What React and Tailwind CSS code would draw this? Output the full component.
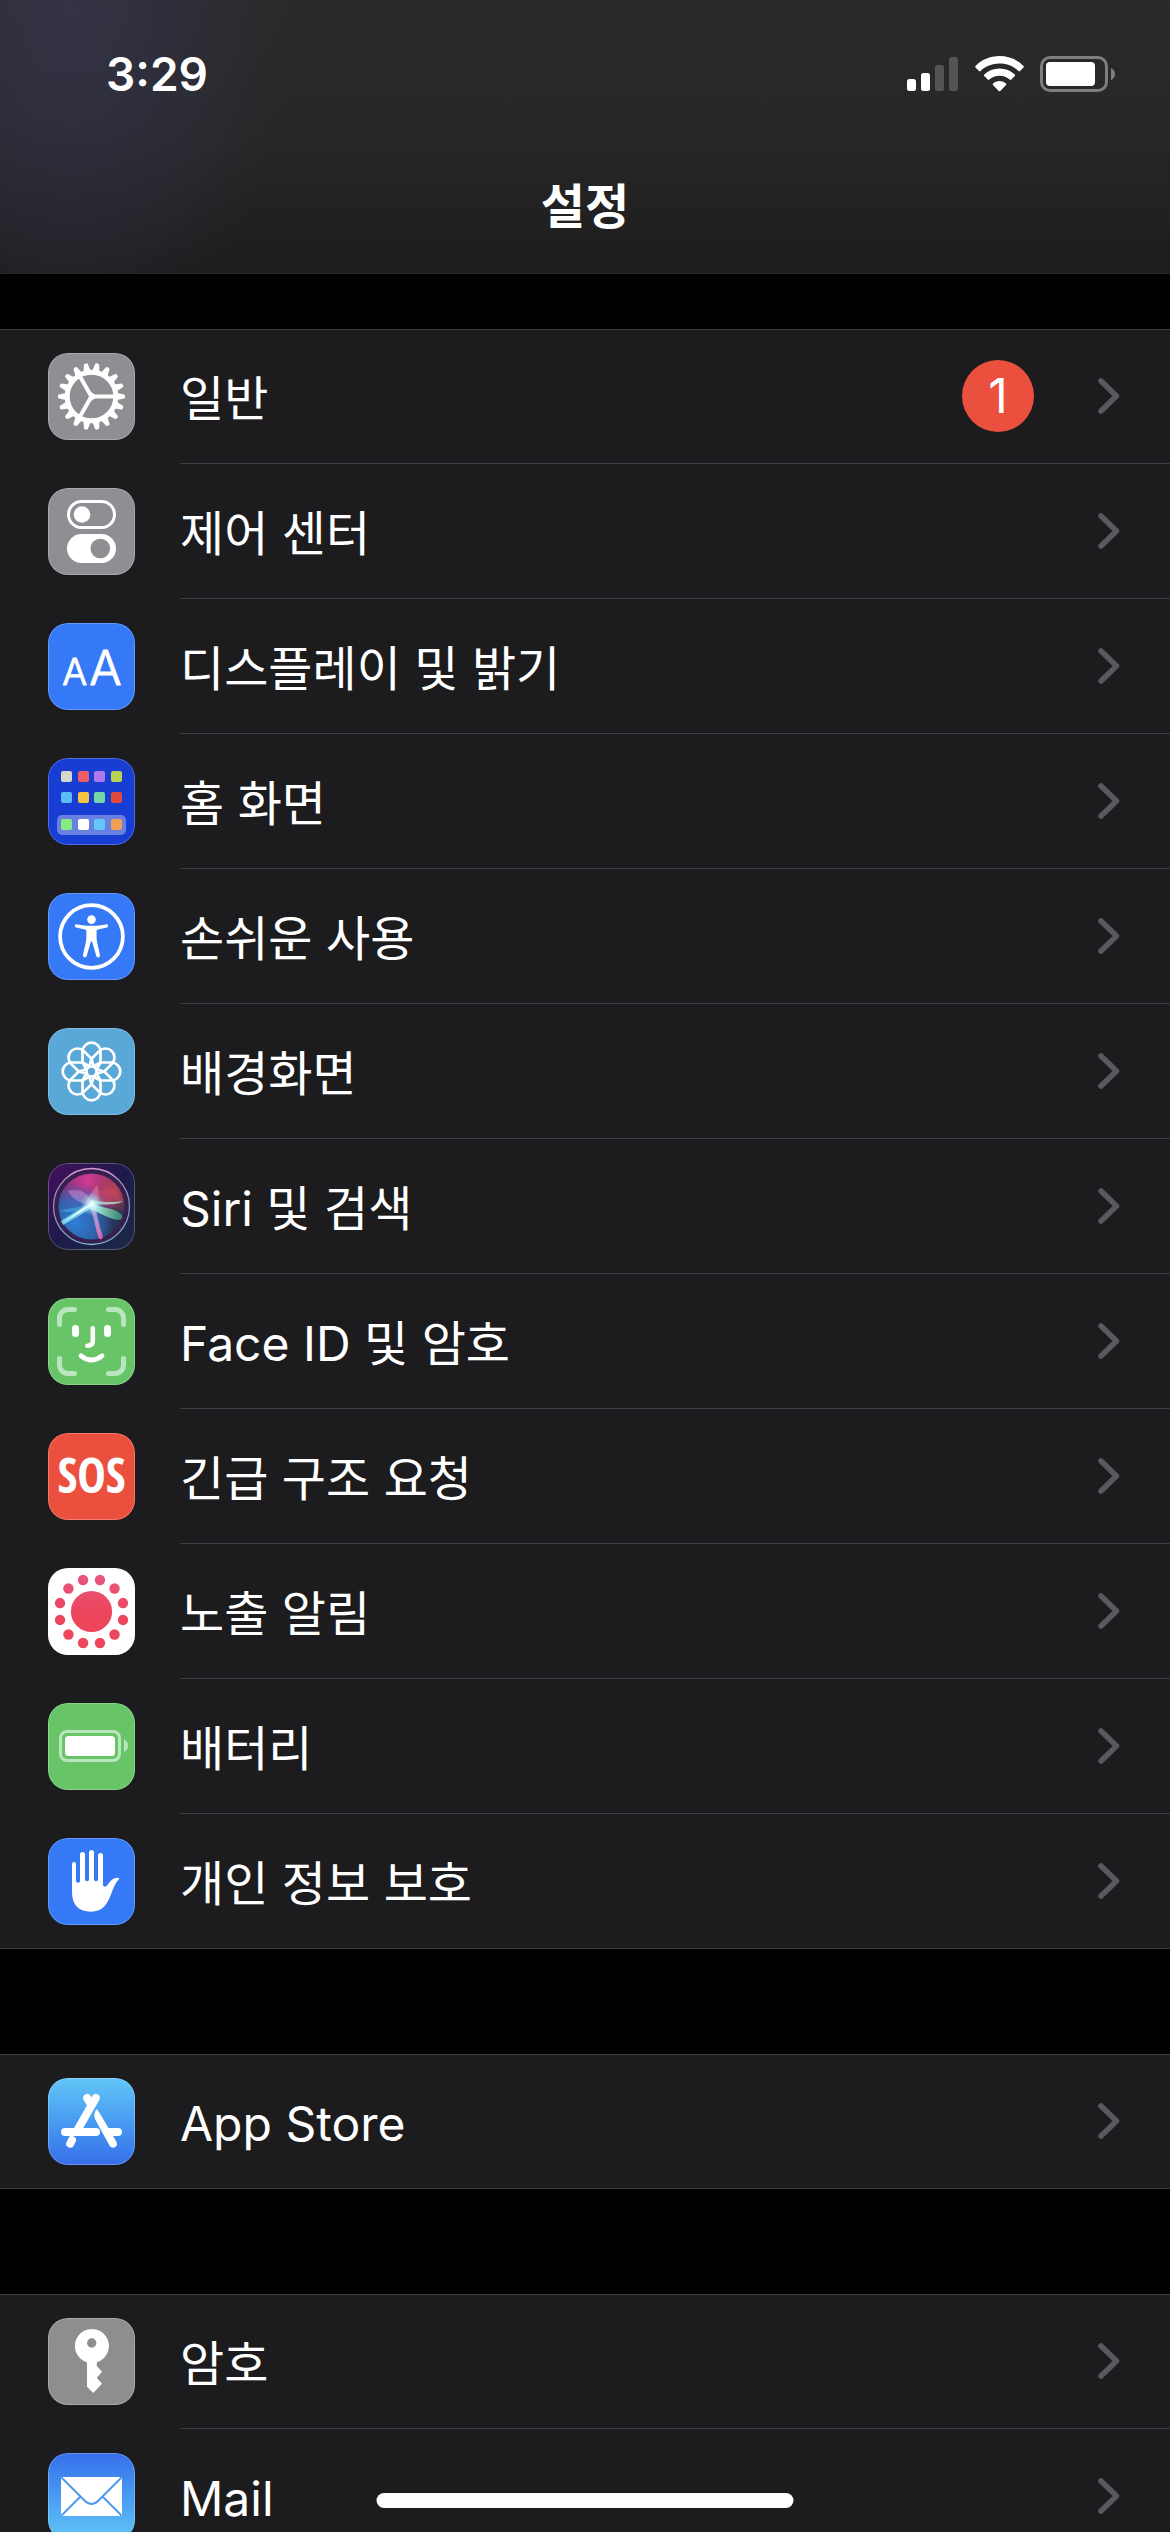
const TEETH = Array.from({ length: 18 }, (_, i) => i * 20)
const DOTS = Array.from({ length: 12 }, (_, i) => 15 + i * 30)
const PETALS = [0, 45, 90, 135, 180, 225, 270, 315]

const HOME_APPS = [
  ["#d6d6cc", "#ec5c66", "#ad78f0", "#b9d254"],
  ["#5cbcf5", "#f7c544", "#74d6a6", "#e4483a"],
  ["#86ec80", "#ffffff", "#62c8f7", "#f0a055"],
]
const HOME_ROWS = [13, 34, 61]
const HOME_COLS = [13, 30, 46, 63]

function GearIcon() {
  return (
    <g transform="translate(43.5 43.5)">
      <circle r="24.3" fill="none" stroke="white" strokeWidth="5" />
      {TEETH.map((angle) => (
        <path
          key={angle}
          d="M25.5 -3.6 L32.6 -2 Q33.6 -1.8 33.6 0 Q33.6 1.8 32.6 2 L25.5 3.6Z"
          fill="white"
          transform={`rotate(${angle})`}
        />
      ))}
      <path
        d="M1.5 0H23M-.8 -1.3L-11.5 -20M-.8 1.3L-11.5 20"
        fill="none"
        stroke="white"
        strokeWidth="4"
      />
      <path d="M-2.6 0L-.4 -4.6L4 -1.5V1.5L-.4 4.6Z" fill="white" />
    </g>
  )
}

function TogglesIcon() {
  return (
    <>
      <rect x="20.5" y="13.5" width="46" height="26" rx="13" fill="none" stroke="white" strokeWidth="3" />
      <circle cx="34" cy="26.5" r="8.3" fill="white" />
      <rect x="19" y="46" width="49" height="29" rx="14.5" fill="white" />
      <circle cx="52.3" cy="60.5" r="9.8" fill="#8e8e93" />
    </>
  )
}

function TextSizeIcon() {
  return (
    <g
      fill="white"
      stroke="white"
      strokeWidth="1"
      strokeLinejoin="round"
      fontWeight="300"
      textAnchor="middle"
      className="font-[Inter]"
    >
      <text x="26.7" y="61.5" fontSize="37">A</text>
      <text x="57.4" y="61.5" fontSize="48">A</text>
    </g>
  )
}

function HomeScreenIcon() {
  return (
    <>
      <rect x="9" y="57" width="69" height="20" rx="5" fill="white" fillOpacity="0.35" />
      {HOME_APPS.map((row, r) =>
        row.map((color, c) => (
          <rect key={color} x={HOME_COLS[c]} y={HOME_ROWS[r]} width="11" height="11" rx="2" fill={color} />
        ))
      )}
    </>
  )
}

function AccessibilityIcon() {
  return (
    <>
      <circle cx="43.5" cy="43.5" r="31.4" fill="none" stroke="white" strokeWidth="3.8" />
      <circle cx="43.5" cy="26.6" r="4.3" fill="white" />
      <path
        d="M28.6 31.2C34 32.3 38 32.8 43.5 32.8S53 32.3 58.4 31.2C60.4 31 60.8 34 58.8 34.6L49.2 36.8C48.6 37 48.6 37.4 48.6 38V44.5C48.7 49 51 57 52 62.2C52.3 64.6 49.2 65.3 48.3 63L44.4 49.5C44 48.2 43 48.2 42.6 49.5L38.7 63C37.8 65.3 34.7 64.6 35 62.2C36 57 38.3 49 38.4 44.5V38C38.4 37.4 38.4 37 37.8 36.8L28.2 34.6C26.2 34 26.6 31 28.6 31.2Z"
        fill="white"
      />
    </>
  )
}

function FlowerIcon() {
  return (
    <g transform="translate(43.5 43.5)" fill="none" stroke="white" strokeWidth="2.7">
      <circle r="5" />
      {PETALS.map((angle) => (
        <path
          key={angle}
          d="M-1.8 -5L-9 -9V-19.8A9 9 0 0 1 9 -19.8V-9L1.8 -5"
          strokeLinejoin="round"
          transform={`rotate(${angle})`}
        />
      ))}
    </g>
  )
}

function SiriIcon() {
  return (
    <>
      <defs>
        <linearGradient id="siriBg" x1="0" y1="0" x2="1" y2="1">
          <stop offset="0" stopColor="#43105c" />
          <stop offset="0.5" stopColor="#1d1a4a" />
          <stop offset="1" stopColor="#1b2b45" />
        </linearGradient>
        <linearGradient id="siriRing" x1="0" y1="0" x2="0" y2="1">
          <stop offset="0" stopColor="#d79ad0" />
          <stop offset="0.5" stopColor="#8f8ab5" />
          <stop offset="1" stopColor="#7fb9cc" />
        </linearGradient>
        <radialGradient id="siriPink" cx="0.45" cy="0.1" r="0.6">
          <stop offset="0" stopColor="#d63a94" />
          <stop offset="0.7" stopColor="#a53288" stopOpacity="0.7" />
          <stop offset="1" stopColor="#a53288" stopOpacity="0" />
        </radialGradient>
        <radialGradient id="siriRed" cx="0.85" cy="0.25" r="0.4">
          <stop offset="0" stopColor="#b8404f" />
          <stop offset="1" stopColor="#b8404f" stopOpacity="0" />
        </radialGradient>
        <radialGradient id="siriBlue" cx="0.25" cy="0.75" r="0.6">
          <stop offset="0" stopColor="#2f80d6" />
          <stop offset="0.6" stopColor="#2f6fc4" stopOpacity="0.75" />
          <stop offset="1" stopColor="#2f6fc4" stopOpacity="0" />
        </radialGradient>
        <radialGradient id="siriGlow">
          <stop offset="0" stopColor="white" />
          <stop offset="0.3" stopColor="#c9fbff" stopOpacity="0.7" />
          <stop offset="1" stopColor="#7fe6ee" stopOpacity="0" />
        </radialGradient>
        <linearGradient id="siriGreen">
          <stop offset="0" stopColor="#d8fff4" />
          <stop offset="1" stopColor="#41c98c" stopOpacity="0.55" />
        </linearGradient>
        <linearGradient id="siriStem" x1="0" y1="0" x2="0" y2="1">
          <stop offset="0" stopColor="#f3e6ff" stopOpacity="0.5" />
          <stop offset="1" stopColor="#ee62ad" stopOpacity="0.9" />
        </linearGradient>
      </defs>
      <rect width="87" height="87" fill="url(#siriBg)" />
      <circle cx="43.5" cy="43.5" r="38" fill="#35204f" stroke="url(#siriRing)" strokeWidth="1.3" />
      <circle cx="43.5" cy="43.5" r="33" fill="#283352" />
      <circle cx="43.5" cy="43.5" r="33" fill="url(#siriPink)" />
      <circle cx="43.5" cy="43.5" r="33" fill="url(#siriRed)" />
      <circle cx="43.5" cy="43.5" r="33" fill="url(#siriBlue)" />
      <path d="M20 28C32 25 40 29 45 41C36 42 25 38 20 28Z" fill="#e9a5dc" fillOpacity="0.4" />
      <path d="M35 43C40 36 45 27 49 22C53 30 50 40 46 48Z" fill="#f49cc4" fillOpacity="0.4" />
      <path d="M43 41C52 23 66 19 75 37C72 42 58 42 43 41Z" fill="#d9556c" fillOpacity="0.3" />
      <path d="M43 41C58 42 70 42 75 38C66 40 52 39 43 37Z" fill="#b9f2dc" fillOpacity="0.7" />
      <path d="M11 48C22 45 33 44 44 41C33 49 22 50 11 48Z" fill="#55cfe8" fillOpacity="0.4" />
      <path d="M42 38L49 42C56 46 65 44 73 51C77 56 71 58 65 56C56 53 48 48 40 44Z" fill="url(#siriGreen)" />
      <path d="M41 43C46 52 47 64 50 73C52 79 56 76 54 71C51 62 49 53 47 42Z" fill="url(#siriStem)" />
      <path d="M44 38L13 58L15 62L46 44Z" fill="#8bf0f5" fillOpacity="0.75" />
      <path d="M44 39L14 60L45 42Z" fill="white" />
      <circle cx="44" cy="41" r="12" fill="url(#siriGlow)" />
    </>
  )
}

function FaceIdIcon() {
  return (
    <g fill="none" strokeLinecap="round">
      <path
        d="M11.5 26.5V20A8.5 8.5 0 0 1 20 11.5H26.5M60.5 11.5H67A8.5 8.5 0 0 1 75.5 20V26.5M75.5 60.5V67A8.5 8.5 0 0 1 67 75.5H60.5M26.5 75.5H20A8.5 8.5 0 0 1 11.5 67V60.5"
        stroke="#bae6bf"
        strokeWidth="5"
      />
      <path d="M27.5 30.5V35.5M59.5 30.5V35.5" stroke="white" strokeWidth="7" />
      <path d="M44.8 30.3V43.5Q44.8 47.5 39.3 47.7" stroke="white" strokeWidth="4.6" />
      <path d="M33 57.8Q43.5 66.2 54 57.8" stroke="white" strokeWidth="4.8" />
    </g>
  )
}

function SosIcon() {
  return (
    <text
      x="43.5"
      y="60"
      fontSize="48"
      fontWeight="700"
      textAnchor="middle"
      fill="white"
      className="font-['Liberation_Sans_Narrow','Open_Sans_Condensed','Liberation_Sans',sans-serif]"
    >
      SOS
    </text>
  )
}

function ExposureIcon() {
  return (
    <>
      <defs>
        <linearGradient id="exposure" gradientUnits="userSpaceOnUse" x1="0" y1="8" x2="0" y2="45">
          <stop offset="0" stopColor="#e8567f" />
          <stop offset="1" stopColor="#ec455c" />
        </linearGradient>
      </defs>
      <g fill="url(#exposure)">
        <circle cx="43.5" cy="43.5" r="20.6" />
        {DOTS.map((angle) => {
          const rad = (angle * Math.PI) / 180
          return (
            <circle key={angle} cx={43.5 + 32.6 * Math.cos(rad)} cy={43.5 + 32.6 * Math.sin(rad)} r="5.2" />
          )
        })}
      </g>
    </>
  )
}

function BatteryTileIcon() {
  return (
    <>
      <rect x="12.5" y="28.5" width="59" height="29" rx="6.5" fill="none" stroke="#bae6bf" strokeWidth="3" />
      <rect x="17" y="33" width="50" height="20" rx="3.5" fill="white" />
      <path d="M76 36.3Q80 38.5 80 42.8T76 49.3Z" fill="#bae6bf" />
    </>
  )
}

function HandIcon() {
  return (
    <path
      d="M24 26A2 2 0 0 1 28 26V43.5Q30 46 32 43.5V16.5A2.5 2.5 0 0 1 37 16.5V42Q39 44.5 41 42V14.5A2.5 2.5 0 0 1 46 14.5V42Q48 44.5 50 42V17.5A2.5 2.5 0 0 1 55 17.5V47Q56 50 58.5 48C62 44.5 63 40 70 39.7Q71.5 40 71 41.2C67 45 65.5 50 63.5 55C59.5 66 55 73.7 43 73.7C29.5 73.7 24 65.5 24 54Z"
      fill="white"
    />
  )
}

function AppStoreIcon() {
  return (
    <g fill="none" stroke="white" strokeWidth="8">
      <path d="M47.8 20L29.5 52M39.2 20L43.5 27.5" strokeLinecap="round" />
      <path d="M17 54H48M60 54H70" strokeLinecap="round" />
      <path d="M28 54H49M58 54H66" />
      <path d="M24 62L22.2 65.7" strokeLinecap="round" />
      <path
        d="M49 31C46 34 45.5 38 47.5 42L61.5 67.5C64 72 70.8 69 68.5 64L54 39Z"
        fill="white"
        stroke="none"
      />
    </g>
  )
}

function KeyIcon() {
  return (
    <path
      fillRule="evenodd"
      d="M39 44.2A17 17 0 1 1 48.8 44.2V48L54 53.7L48.8 59.7L54 65.7L45.3 75L39 68.7ZM43.7 20.3A4.7 4.7 0 1 0 43.7 29.7A4.7 4.7 0 1 0 43.7 20.3Z"
      fill="white"
    />
  )
}

function MailIcon() {
  return (
    <>
      <rect x="13" y="24" width="61" height="39" rx="2" fill="white" />
      <path
        d="M13.5 24.5L36.5 47.5Q43.5 54.5 50.5 47.5L73.5 24.5M13.5 62.5L32.5 43.5M73.5 62.5L54.5 43.5"
        fill="none"
        stroke="#4a97f0"
        strokeWidth="1.8"
      />
    </>
  )
}

const GROUPS = [
  [
    { label: "일반", tile: "bg-[#8e8e93]", icon: GearIcon, badge: 1 },
    { label: "제어 센터", tile: "bg-[#8e8e93]", icon: TogglesIcon },
    { label: "디스플레이 및 밝기", tile: "bg-[#3579f6]", icon: TextSizeIcon },
    { label: "홈 화면", tile: "bg-[#183dd3]", icon: HomeScreenIcon },
    { label: "손쉬운 사용", tile: "bg-[#3579f6]", icon: AccessibilityIcon },
    { label: "배경화면", tile: "bg-[#59a8d8]", icon: FlowerIcon },
    { label: "Siri 및 검색", tile: "bg-[#1d1a4a]", icon: SiriIcon },
    { label: "Face ID 및 암호", tile: "bg-[#67c567]", icon: FaceIdIcon },
    { label: "긴급 구조 요청", tile: "bg-[#eb4f3e]", icon: SosIcon },
    { label: "노출 알림", tile: "bg-white", icon: ExposureIcon },
    { label: "배터리", tile: "bg-[#67c567]", icon: BatteryTileIcon },
    { label: "개인 정보 보호", tile: "bg-[#3579f6]", icon: HandIcon },
  ],
  [{ label: "App Store", tile: "bg-linear-to-b from-[#62c6f7] to-[#376eea]", icon: AppStoreIcon }],
  [
    { label: "암호", tile: "bg-[#8e8e90]", icon: KeyIcon },
    { label: "Mail", tile: "bg-linear-to-b from-[#376eea] to-[#62c6f7]", icon: MailIcon },
  ],
]

function StatusIcons() {
  return (
    <div className="flex items-center gap-4">
      <svg width="52" height="36" viewBox="0 0 52 36" fill="white" aria-label="Signal">
        <rect x="0" y="23" width="9" height="12" rx="2.5" />
        <rect x="14" y="17" width="9" height="18" rx="2.5" />
        <rect x="28" y="9" width="9" height="26" rx="2.5" fill="#545454" />
        <rect x="42" y="1" width="9" height="34" rx="2.5" fill="#545454" />
      </svg>
      <svg width="49" height="36" viewBox="0 0 49 36" fill="white" aria-label="Wi-Fi">
        <path d="M24.5 0C34 0 42.5 3.7 48.5 10Q49.2 10.8 48.5 11.5L45 15Q44.2 15.8 43.5 15C38.5 10.3 32 7.5 24.5 7.5S10.5 10.3 5.5 15Q4.8 15.8 4 15L.5 11.5Q-.2 10.8 .5 10C6.5 3.7 15 0 24.5 0Z" />
        <path d="M24.5 12.5C30.5 12.5 35.8 14.7 39.8 18.5Q40.5 19.3 39.8 20L36.3 23.5Q35.5 24.3 34.7 23.6C32 21.2 28.5 19.8 24.5 19.8S17 21.2 14.3 23.6Q13.5 24.3 12.7 23.5L9.2 20Q8.5 19.3 9.2 18.5C13.2 14.7 18.5 12.5 24.5 12.5Z" />
        <path d="M24.5 25C27 25 29.3 25.9 31 27.5Q31.8 28.3 31 29L25.3 35Q24.5 35.7 23.7 35L18 29Q17.2 28.3 18 27.5C19.7 25.9 22 25 24.5 25Z" />
      </svg>
      <svg width="75" height="36" viewBox="0 0 75 36" aria-label="Battery">
        <rect x="1.5" y="1.5" width="65" height="33" rx="8.5" fill="none" stroke="#7e7e7e" strokeWidth="3" />
        <rect x="6" y="6" width="49" height="24" rx="4" fill="white" />
        <path d="M71 12Q75 14 75 18T71 24Z" fill="#7e7e7e" />
      </svg>
    </div>
  )
}

function SettingsRow({ label, tile, icon: Icon, badge }) {
  return (
    <li className="group">
      <a href="#" className="flex gap-[45px] pl-12">
        <span className={`relative mt-6 size-[87px] shrink-0 overflow-hidden rounded-[20px] ${tile}`}>
          <svg viewBox="0 0 87 87" className="size-full" aria-hidden="true">
            <Icon />
          </svg>
          <span className="absolute inset-0 rounded-[20px] border border-white/25" />
        </span>
        <span className="flex h-[135px] flex-1 items-center border-b border-[#3d3d41] pr-[50px] group-last:border-transparent">
          <span className="flex-1 pt-1.5">{label}</span>
          {badge && (
            <span className="mr-16 flex size-[72px] items-center justify-center rounded-full bg-[#eb4f3e]">
              {badge}
            </span>
          )}
          <svg width="22" height="36" viewBox="0 0 22 36" fill="none" aria-hidden="true">
            <path d="M3 3L18.5 18L3 33" stroke="#5a5a5e" strokeWidth="5.5" strokeLinecap="round" strokeLinejoin="round" />
          </svg>
        </span>
      </a>
    </li>
  )
}

export default function App() {
  return (
    <div className="flex h-screen flex-col overflow-hidden bg-black font-[Inter,'Noto_Sans_CJK_KR',sans-serif] text-[48px] leading-[60px] text-white">
      <header className="relative shrink-0 border-b border-[#2a2a2c] bg-linear-to-b from-[#2a2a2a] via-[#272727] to-[#1d1d1d]">
        <div className="absolute inset-0 bg-[radial-gradient(ellipse_220px_340px_at_70px_20px,#3c3c6080,#38385a60_40%,transparent)]" />
        <div className="relative flex items-center justify-between pt-11 pr-[55px] pl-[106px]">
          <time className="text-[46px] font-semibold">3:29</time>
          <StatusIcons />
        </div>
        <h1 className="relative pt-[73px] pb-9 text-center font-bold">설정</h1>
      </header>

      <main className="flex flex-1 flex-col gap-[105px] overflow-y-auto pt-[55px] [scrollbar-width:none]">
        {GROUPS.map((rows) => (
          <ul
            key={rows[0].label}
            className="shrink-0 bg-[#1c1c1e] shadow-[inset_0_1px_0_#3d3d41,inset_0_-1px_0_#3d3d41]"
          >
            {rows.map((row) => (
              <SettingsRow key={row.label} {...row} />
            ))}
          </ul>
        ))}
      </main>

      <div className="fixed bottom-6 left-1/2 h-[15px] w-[417px] -translate-x-1/2 rounded-full bg-white" />
    </div>
  )
}
